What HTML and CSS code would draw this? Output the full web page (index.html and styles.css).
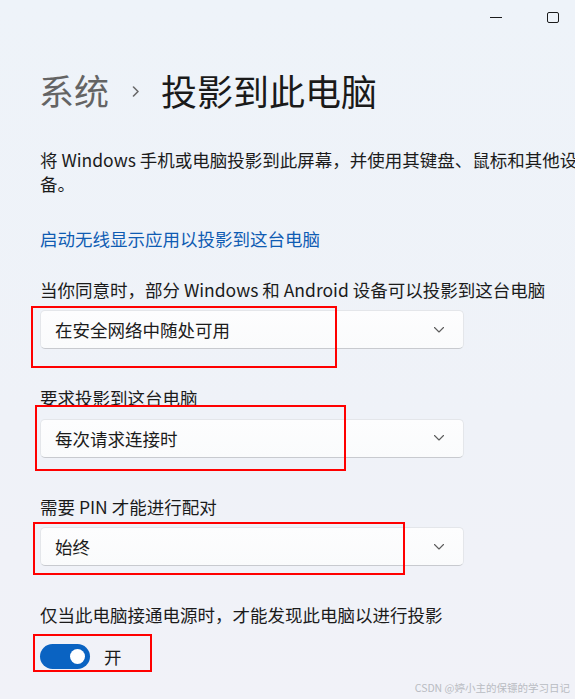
FILE: index.html
```html
<!DOCTYPE html>
<html lang="zh-CN">
<head>
<meta charset="utf-8">
<title>投影到此电脑</title>
<link rel="stylesheet" href="styles.css">
</head>
<body>
<div class="window">
  <div class="titlebar">
    <svg class="cap-min" width="12" height="1" viewBox="0 0 12 1"><rect x="0" y="0" width="12" height="1" fill="#1b1b1b"/></svg>
    <svg class="cap-max" width="12" height="11" viewBox="0 0 12 11"><rect x="0.5" y="0.5" width="11" height="10" rx="1.5" fill="none" stroke="#1b1b1b" stroke-width="1"/></svg>
  </div>

  <main class="content">
    <h1 class="title">
      <span class="crumb-parent">系统</span>
      <svg class="crumb-sep" width="8" height="11" viewBox="0 0 8 11"><polyline points="1.5,1 6,5.5 1.5,10" fill="none" stroke="#6a6a6a" stroke-width="1.6" stroke-linecap="round" stroke-linejoin="round"/></svg>
      <span class="crumb-current">投影到此电脑</span>
    </h1>

    <p class="desc">将 Windows 手机或电脑投影到此屏幕，并使用其键盘、鼠标和其他设备。</p>

    <a class="link" href="#">启动无线显示应用以投影到这台电脑</a>

    <div class="field">
      <div class="label">当你同意时，部分 Windows 和 Android 设备可以投影到这台电脑</div>
      <div class="dropdown">
        <span>在安全网络中随处可用</span>
        <svg class="chev" width="10" height="6" viewBox="0 0 10 6"><polyline points="0.5,0.5 5,5 9.5,0.5" fill="none" stroke="#5c5c5c" stroke-width="1.1" stroke-linecap="round" stroke-linejoin="round"/></svg>
        <div class="mark mark-1"></div>
      </div>
    </div>

    <div class="field">
      <div class="label">要求投影到这台电脑</div>
      <div class="dropdown">
        <span>每次请求连接时</span>
        <svg class="chev" width="10" height="6" viewBox="0 0 10 6"><polyline points="0.5,0.5 5,5 9.5,0.5" fill="none" stroke="#5c5c5c" stroke-width="1.1" stroke-linecap="round" stroke-linejoin="round"/></svg>
        <div class="mark mark-2"></div>
      </div>
    </div>

    <div class="field">
      <div class="label">需要 PIN 才能进行配对</div>
      <div class="dropdown">
        <span>始终</span>
        <svg class="chev" width="10" height="6" viewBox="0 0 10 6"><polyline points="0.5,0.5 5,5 9.5,0.5" fill="none" stroke="#5c5c5c" stroke-width="1.1" stroke-linecap="round" stroke-linejoin="round"/></svg>
        <div class="mark mark-3"></div>
      </div>
    </div>

    <div class="field">
      <div class="label">仅当此电脑接通电源时，才能发现此电脑以进行投影</div>
      <div class="toggle-row">
        <div class="toggle"><span class="knob"></span></div>
        <span class="toggle-text">开</span>
        <div class="mark mark-4"></div>
      </div>
    </div>
  </main>

  <div class="watermark">CSDN @婷小主的保镖的学习日记</div>
</div>
</body>
</html>
```

FILE: styles.css
```css
html, body {
  margin: 0;
  padding: 0;
  height: 100%;
  overflow: hidden;
}

body {
  background: linear-gradient(180deg, #eef3f9 0%, #eff2f8 60%, #f1f2f8 100%);
  font-family: "Noto Sans CJK SC", "Noto Sans", sans-serif;
  color: #1b1b1b;
}

.window {
  position: relative;
  height: 699px;
}

.titlebar {
  display: flex;
  justify-content: flex-end;
  align-items: center;
  gap: 45px;
  height: 35px;
  padding-right: 16px;
}

.cap-min, .cap-max {
  display: block;
}

.content {
  padding-left: 40px;
}

.title {
  margin: 31px 0 0 -1px;
  display: flex;
  align-items: center;
  height: 48px;
  font-size: 35px;
  line-height: 48px;
  font-weight: 400;
}

.crumb-parent {
  color: #646464;
}

.crumb-sep {
  display: block;
  margin: 2px 21px 0 23px;
}

.crumb-current {
  color: #1a1a1a;
  font-size: 36px;
}

.desc {
  margin: 33.5px 0 0;
  width: 540px;
  font-size: 17.5px;
  line-height: 24px;
}

.link {
  display: block;
  margin-top: 30px;
  font-size: 17.5px;
  line-height: 25px;
  color: #0f5cb3;
  text-decoration: none;
}

.field {
  margin-top: 36px;
}

.link + .field {
  margin-top: 26px;
}

.label {
  font-size: 17.5px;
  line-height: 25px;
  color: #1b1b1b;
  white-space: nowrap;
}

.dropdown {
  position: relative;
  box-sizing: border-box;
  margin-top: 8.5px;
  width: 424px;
  height: 39px;
  display: flex;
  align-items: center;
  justify-content: space-between;
  padding: 0 19px 0 14px;
  background: linear-gradient(180deg, #fdfdfe 0%, #fafbfc 100%);
  border: 1px solid #e4e6ea;
  border-bottom-color: #c8cacf;
  border-radius: 5px;
  font-size: 17.5px;
  color: #1b1b1b;
}

.chev {
  display: block;
}

.toggle-row {
  position: relative;
  margin-top: 17px;
  display: flex;
  align-items: center;
  height: 25px;
}

.toggle {
  box-sizing: border-box;
  width: 50px;
  height: 25px;
  border-radius: 12.5px;
  background: #0a63c2;
  display: flex;
  align-items: center;
  justify-content: flex-end;
  padding-right: 5px;
}

.knob {
  width: 15px;
  height: 15px;
  border-radius: 50%;
  background: #ffffff;
}

.toggle-text {
  margin-left: 14px;
  font-size: 17.5px;
  line-height: 25px;
  color: #1b1b1b;
}

/* red annotation boxes drawn over the controls */
.mark {
  position: absolute;
  box-sizing: border-box;
  border: 2px solid #ff0000;
  pointer-events: none;
}

.mark-1 { left: -10px; top: -5px; width: 306px; height: 62px; }
.mark-2 { left: -6px; top: -15px; width: 311px; height: 66px; }
.mark-3 { left: -8px; top: -6px; width: 372px; height: 53px; }
.mark-4 { left: -7px; top: -10px; width: 119px; height: 38px; }

.watermark {
  position: absolute;
  right: 5px;
  bottom: 4px;
  font-size: 10.5px;
  line-height: 14px;
  color: #b9bcc2;
  white-space: nowrap;
}
```
